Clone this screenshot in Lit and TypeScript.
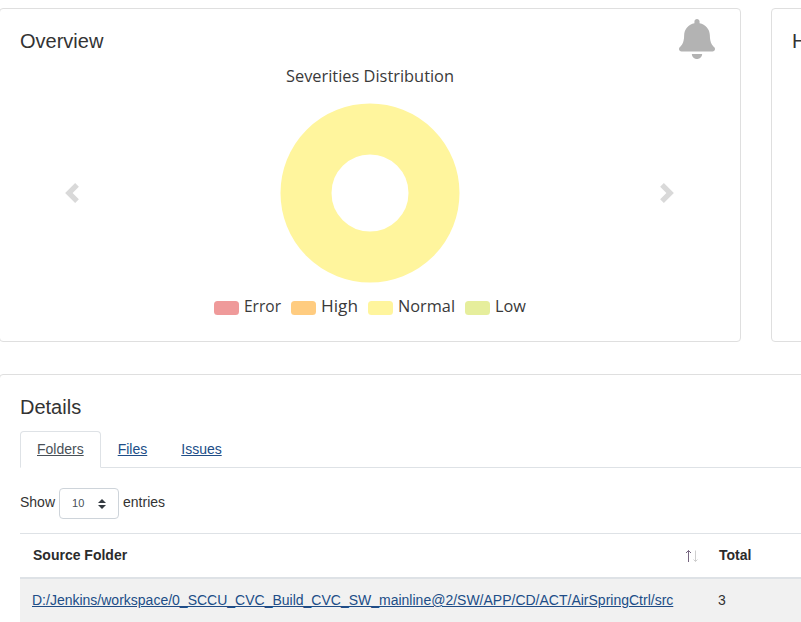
import { LitElement, html, css, svg } from "lit";
import { customElement } from "lit/decorators.js";

const SEVERITIES = [
  { name: "Error", color: "#ef9a9a", x: 0, width: 37 },
  { name: "High", color: "#ffcc80", x: 77, width: 37 },
  { name: "Normal", color: "#fff59d", x: 154, width: 57 },
  { name: "Low", color: "#e6ee9c", x: 251, width: 31 },
];

@customElement("severity-chart")
class SeverityChart extends LitElement {
  static styles = css`
    :host { display: block; }
    svg { display: block; }
    text { font: 17px "Open Sans", "Noto Sans", sans-serif; fill: #3a3a3a; }
  `;
  render() {
    return html`<svg width="320" height="256" viewBox="0 0 320 256">
      <text x="76" y="18" textLength="168" lengthAdjust="spacingAndGlyphs">Severities Distribution</text>
      <circle cx="160" cy="129" r="64" fill="none" stroke="#fff59d" stroke-width="51"></circle>
      ${SEVERITIES.map((s) => svg`
        <rect x=${s.x + 4} y="237" width="25" height="14" rx="3.5" fill=${s.color}></rect>
        <text x=${s.x + 34} y="248" textLength=${s.width} lengthAdjust="spacingAndGlyphs">${s.name}</text>`)}
    </svg>`;
  }
}

@customElement("app-root")
class AppRoot extends LitElement {
  static styles = css`
    :host {
      display: block; height: 622px; overflow: hidden; background: #fff;
      font: 14px/21px "Liberation Sans", Arial, sans-serif; color: #333;
    }
    * { box-sizing: border-box; }
    .page { width: 1520px; margin-left: -1px; padding-top: 8px; }
    .cards { display: flex; gap: 30px; margin-bottom: 32px; }
    .card { border: 1px solid #dfdfdf; border-radius: 4px; padding: 20px; background: #fff; }
    .top { width: 742px; height: 334px; flex: none; }
    .head { display: flex; justify-content: space-between; height: 35px; }
    h5 { margin: 0; font-size: 20px; line-height: 24px; font-weight: 400; }
    .bell { flex: none; margin: -10px 5px 0 0; color: #b3b3b3; }
    .carousel { display: flex; align-items: center; justify-content: space-between; padding: 0 43px 0 42px; }
    .arrow { color: #d9d9d9; margin-top: 2px; }
    .details { height: 320px; }
    .details h5 { margin-bottom: 12px; }
    .tabs { display: flex; border-bottom: 1px solid #dee2e6; height: 37px; }
    a { color: #204d87; text-decoration: underline; }
    .tab { border: 1px solid transparent; border-radius: 4px 4px 0 0; padding: 7px 16px; height: 37px; }
    .tab.active { color: #495057; background: #fff; border-color: #dee2e6 #dee2e6 #fff; }
    .length { display: flex; align-items: center; gap: 4px; height: 31px; margin: 20px 0 14px; }
    .label { margin-top: -3px; }
    .select {
      display: flex; align-items: center; justify-content: space-between;
      width: 60px; height: 31px; padding: 0 12px; border: 1px solid #ced4da; border-radius: 4px;
      font-size: 11px; color: #495057;
    }
    .row { display: grid; grid-template-columns: 686px 1fr; border-top: 1px solid #dee2e6; width: 1478px; }
    .header { height: 46px; border-bottom: 2px solid #dee2e6; font-weight: 700; }
    .header .cell { display: flex; justify-content: space-between; padding: 11px 7px 0 13px; color: #2b2b2b; }
    .sort { margin-top: 5px; }
    .body { border: 0; background: #f1f1f1; height: 60px; }
    .cell { padding: 11px 12px 0; }
  `;
  private arrow(d: string) {
    return html`<svg class="arrow" width="20" height="20" viewBox="0 0 8 8"><path fill="currentColor" d=${d}></path></svg>`;
  }
  render() {
    return html`<div class="page">
      <div class="cards">
        <section class="card top">
          <div class="head">
            <h5>Overview</h5>
            <svg class="bell" width="36" height="40" viewBox="0 0 448 512" preserveAspectRatio="none"><path fill="currentColor" d="M224 512c35.32 0 63.97-28.65 63.97-64H160.03c0 35.35 28.65 64 63.97 64zm215.39-149.71c-19.32-20.76-55.47-51.99-55.47-154.29 0-77.7-54.48-139.9-127.94-155.16V32c0-17.67-14.32-32-31.98-32s-31.98 14.33-31.98 32v20.84C118.56 68.1 64.08 130.3 64.08 208c0 102.3-36.15 133.53-55.47 154.29-6 6.45-8.66 14.16-8.61 21.71.11 16.4 12.98 32 32.1 32h383.8c19.12 0 32-15.6 32.1-32 .05-7.55-2.61-15.27-8.61-21.71z"></path></svg>
          </div>
          <div class="carousel">
            ${this.arrow("M5.25 0l-4 4 4 4 1.5-1.5L4.25 4l2.5-2.5L5.25 0z")}
            <severity-chart></severity-chart>
            ${this.arrow("M2.75 0l-1.5 1.5L3.75 4l-2.5 2.5L2.75 8l4-4-4-4z")}
          </div>
        </section>
        <section class="card top"><h5>History</h5></section>
      </div>
      <section class="card details">
        <h5>Details</h5>
        <nav class="tabs">
          <a class="tab active">Folders</a><a class="tab">Files</a><a class="tab">Issues</a>
        </nav>
        <div class="length">
          <span class="label">Show</span>
          <span class="select">10
            <svg width="8" height="10" viewBox="0 0 4 5"><path fill="#343a40" d="M2 0L0 2h4zm0 5L0 3h4z"></path></svg>
          </span>
          <span class="label">entries</span>
        </div>
        <div class="row header">
          <div class="cell">Source Folder
            <svg class="sort" width="15" height="13" viewBox="0 0 15 13" fill="none">
              <path d="M4.5 12V.5M2 3L4.5 .5L7 3" stroke="#75657f"></path>
              <path d="M11.5 .5V11.5M9.5 9.5l2 2L13.5 9.5" stroke="#cfcfcf"></path>
            </svg>
          </div>
          <div class="cell">Total</div>
        </div>
        <div class="row body">
          <div class="cell"><a>D:/Jenkins/workspace/0_SCCU_CVC_Build_CVC_SW_mainline@2/SW/APP/CD/ACT/AirSpringCtrl/src</a></div>
          <div class="cell">3</div>
        </div>
      </section>
    </div>`;
  }
}
